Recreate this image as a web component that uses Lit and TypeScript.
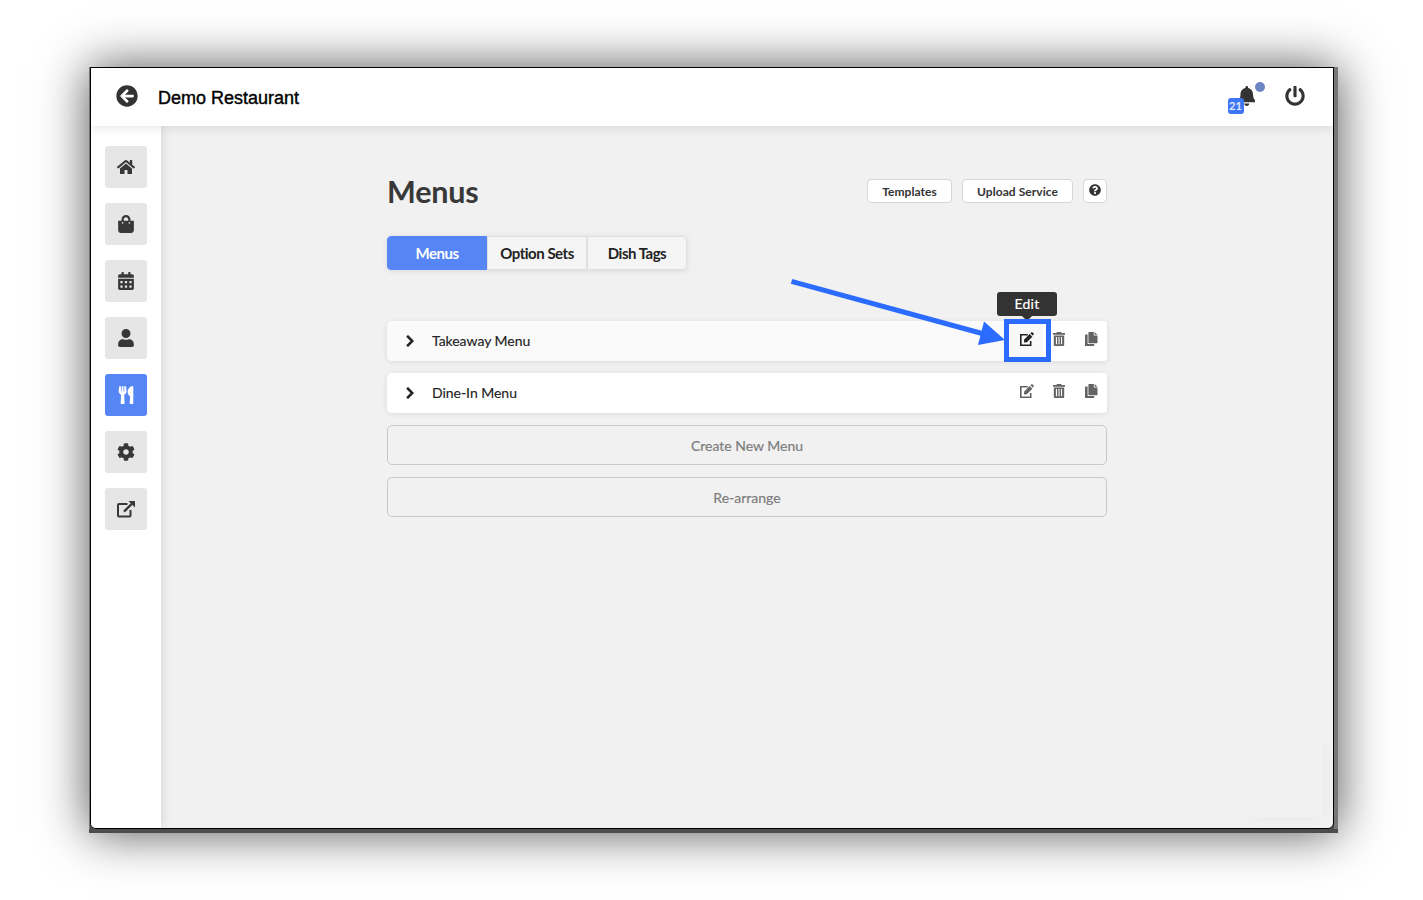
import { LitElement, html, css, svg } from "lit";
import { customElement, property } from "lit/decorators.js";

type Glyph = { w: number; h: number; body: unknown };

const cell = (x: number, y: number) =>
  `M${x} ${y + 12}c0-6.6 5.4-12 12-12h40c6.6 0 12 5.4 12 12v40c0 6.6-5.4 12-12 12h-40c-6.6 0-12-5.4-12-12z`;

const GLYPHS: Record<string, Glyph> = {
  back: { w: 512, h: 512, body: svg`<path d="M256 504C119 504 8 393 8 256S119 8 256 8s248 111 248 248-111 248-248 248zm28.9-143.6L209.4 288H392c13.3 0 24-10.7 24-24v-16c0-13.3-10.7-24-24-24H209.4l75.5-72.4c9.7-9.3 9.9-24.8.4-34.3l-11-10.9c-9.4-9.4-24.6-9.4-33.9 0L107.7 239c-9.4 9.4-9.4 24.6 0 33.9l132.7 132.7c9.4 9.4 24.6 9.4 33.9 0l11-10.9c9.5-9.5 9.3-25-.4-34.3z"/>` },
  home: { w: 576, h: 512, body: svg`<path d="M280.37 148.26L96 300.11V464a16 16 0 0 0 16 16l112.06-.29a16 16 0 0 0 15.92-16V368a16 16 0 0 1 16-16h64a16 16 0 0 1 16 16v95.64a16 16 0 0 0 16 16.05L464 480a16 16 0 0 0 16-16V300L295.67 148.26a12.19 12.19 0 0 0-15.3 0zM571.6 251.47L488 182.56V44.05a12 12 0 0 0-12-12h-56a12 12 0 0 0-12 12v72.61L318.47 43a48 48 0 0 0-61 0L4.34 251.47a12 12 0 0 0-1.6 16.9l25.5 31A12 12 0 0 0 45.15 301l235.22-193.74a12.19 12.19 0 0 1 15.3 0L530.9 301a12 12 0 0 0 16.9-1.6l25.5-31a12 12 0 0 0-1.7-16.93z"/>` },
  bag: { w: 448, h: 512, body: svg`<path d="M352 160v-32C352 57.42 294.579 0 224 0 153.42 0 96 57.42 96 128v32H0v272c0 44.183 35.817 80 80 80h288c44.183 0 80-35.817 80-80V160h-96zm-192-32c0-35.29 28.71-64 64-64s64 28.71 64 64v32H160v-32zm160 120c-13.255 0-24-10.745-24-24s10.745-24 24-24 24 10.745 24 24-10.745 24-24 24zm-192 0c-13.255 0-24-10.745-24-24s10.745-24 24-24 24 10.745 24 24-10.745 24-24 24z"/>` },
  calendar: { w: 448, h: 512, body: svg`<path fill-rule="evenodd" d="M0 464c0 26.5 21.5 48 48 48h352c26.5 0 48-21.5 48-48V192H0v272z${cell(64, 256)}${cell(192, 256)}${cell(320, 256)}${cell(64, 384)}${cell(192, 384)}${cell(320, 384)}M400 64h-48V16c0-8.8-7.2-16-16-16h-32c-8.8 0-16 7.2-16 16v48H160V16c0-8.8-7.2-16-16-16h-32c-8.8 0-16 7.2-16 16v48H48C21.5 64 0 85.5 0 112v48h448v-48c0-26.5-21.5-48-48-48z"/>` },
  user: { w: 448, h: 512, body: svg`<path d="M224 256c70.7 0 128-57.3 128-128S294.7 0 224 0 96 57.3 96 128s57.3 128 128 128zm89.6 32h-16.7c-22.2 10.2-46.9 16-72.9 16s-50.6-5.8-72.9-16h-16.7C60.2 288 0 348.2 0 422.4V464c0 26.5 21.5 48 48 48h352c26.5 0 48-21.5 48-48v-41.6c0-74.2-60.2-134.4-134.4-134.4z"/>` },
  utensils: { w: 416, h: 512, body: svg`<path d="M207.9 15.2c.8 4.7 16.1 94.5 16.1 128.8 0 52.3-27.8 89.6-68.9 104.6L168 486.7c.7 13.7-10.2 25.3-24 25.3H80c-13.7 0-24.7-11.5-24-25.3l12.9-238.1C27.7 233.6 0 196.2 0 144 0 109.6 15.3 19.9 16.1 15.2 19.3-5.1 61.4-5.4 64 16.3v141.2c1.3 3.4 15.1 3.2 16 0 1.4-25.3 7.9-139.2 8-141.8 3.3-20.8 44.7-20.8 47.9 0 .2 2.7 6.6 116.5 8 141.8.9 3.2 14.8 3.4 16 0V16.3c2.6-21.6 44.8-21.4 48-1.1zm119.2 285.7l-15 185.1c-1.2 14 9.9 26 23.9 26h56c13.3 0 24-10.7 24-24V24c0-13.2-10.7-24-24-24-82.5 0-221.4 178.5-64.9 300.9z"/>` },
  cog: { w: 512, h: 512, body: svg`<path d="M487.4 315.7l-42.6-24.6c4.3-23.2 4.3-47 0-70.2l42.6-24.6c4.9-2.8 7.1-8.6 5.5-14-11.1-35.6-30-67.8-54.7-94.6-3.8-4.1-10-5.1-14.8-2.3L380.8 110c-17.9-15.4-38.5-27.3-60.8-35.1V25.8c0-5.6-3.9-10.5-9.4-11.7-36.7-8.2-74.3-7.8-109.2 0-5.5 1.2-9.4 6.1-9.4 11.7V75c-22.2 7.9-42.8 19.8-60.8 35.1L88.7 85.5c-4.9-2.8-11-1.9-14.8 2.3-24.7 26.7-43.6 58.9-54.7 94.6-1.7 5.4.6 11.2 5.5 14L67.3 221c-4.3 23.2-4.3 47 0 70.2l-42.6 24.6c-4.9 2.8-7.1 8.6-5.5 14 11.1 35.6 30 67.8 54.7 94.6 3.8 4.1 10 5.1 14.8 2.3l42.6-24.6c17.9 15.4 38.5 27.3 60.8 35.1v49.2c0 5.6 3.9 10.5 9.4 11.7 36.7 8.2 74.3 7.8 109.2 0 5.5-1.2 9.4-6.1 9.4-11.7v-49.2c22.2-7.9 42.8-19.8 60.8-35.1l42.6 24.6c4.9 2.8 11 1.9 14.8-2.3 24.7-26.7 43.6-58.9 54.7-94.6 1.5-5.5-.7-11.3-5.6-14.1zM256 336c-44.1 0-80-35.9-80-80s35.9-80 80-80 80 35.9 80 80-35.9 80-80 80z"/>` },
  external: { w: 18, h: 18, body: svg`<path d="M10.5 4H1.9Q1 4 1 4.9v10.7q0 .9.9.9h10.7q.9 0 .9-.9V10" fill="none" stroke="currentColor" stroke-width="2"/><path d="M7 11.6 15.6 3" fill="none" stroke="currentColor" stroke-width="2.4"/><path d="M11.400 .9h5.900q.7 0 .7.7v5.900z"/>` },
  bell: { w: 448, h: 512, body: svg`<path d="M224 512c35.32 0 63.97-28.65 63.97-64H160.03c0 35.35 28.65 64 63.97 64zm215.39-149.71c-19.32-20.76-55.47-51.99-55.47-154.29 0-77.7-54.48-139.9-127.94-155.16V32c0-17.67-14.32-32-31.98-32s-31.98 14.33-31.98 32v20.84C118.56 68.1 64.08 130.3 64.08 208c0 102.3-36.15 133.53-55.47 154.29-6 6.45-8.66 14.16-8.61 21.71.11 16.4 12.98 32 32.1 32h383.8c19.12 0 32-15.6 32.1-32 .05-7.55-2.61-15.27-8.61-21.71z"/>` },
  power: { w: 512, h: 512, body: svg`<path d="M400 54.1c63 45 104 118.6 104 201.9 0 136.8-110.8 247.7-247.5 248C120 504.3 8.2 393 8 256.4 7.9 173.1 48.9 99.3 111.8 54.2c11.7-8.3 28-4.8 35 7.7L162.6 90c5.9 10.5 3.1 23.8-6.6 31-41.5 30.8-68 79.6-68 134.9-.1 92.3 74.5 168.1 168 168.1 91.6 0 168.6-74.2 168-169.1-.3-51.8-24.7-101.8-68.1-134-9.7-7.2-12.4-20.5-6.5-30.9l15.8-28.1c7-12.4 23.2-16.1 34.8-7.8zM296 264V24c0-13.3-10.7-24-24-24h-32c-13.3 0-24 10.7-24 24v240c0 13.3 10.7 24 24 24h32c13.3 0 24-10.7 24-24z"/>` },
  question: { w: 512, h: 512, body: svg`<path d="M504 256c0 136.997-111.043 248-248 248S8 392.997 8 256C8 119.083 119.043 8 256 8s248 111.083 248 248zM262.655 90c-54.497 0-89.255 22.957-116.549 63.758-3.536 5.286-2.353 12.415 2.715 16.258l34.699 26.31c5.205 3.947 12.621 3.008 16.665-2.122 17.864-22.658 30.113-35.797 57.303-35.797 20.429 0 45.698 13.148 45.698 32.958 0 14.976-12.363 22.667-32.534 33.976C247.128 238.528 216 254.941 216 296v4c0 6.627 5.373 12 12 12h56c6.627 0 12-5.373 12-12v-1.333c0-28.462 83.186-29.647 83.186-106.667 0-58.002-60.165-102-116.531-102zM256 338c-25.365 0-46 20.635-46 46 0 25.364 20.635 46 46 46s46-20.636 46-46c0-25.365-20.635-46-46-46z"/>` },
  chevron: { w: 8, h: 12, body: svg`<path d="M1.1 .8 6.3 6 1.1 11.2" fill="none" stroke="currentColor" stroke-width="2.5"/>` },
  edit: { w: 14, h: 14, body: svg`<path d="M7.800 2.700H.8v10.500h9.900V9" fill="none" stroke="currentColor" stroke-width="1.6"/><path d="M3.900 10.500l.3-3.100 5.500-5.400 2.700 2.700-5.500 5.500z"/><path d="M10.4 1.300l.9-.9q.6-.6 1.300 0l1 1q.6.7 0 1.3l-.9.9z"/>` },
  trash: { w: 12, h: 14, body: svg`<path d="M0 1h3.400L4 .1h4l.6.9H12v1.700H0z"/><path fill-rule="evenodd" d="M.8 3.400h10.400v9.500q0 1.100-1.100 1.100H1.900Q.8 14 .8 12.900zM2.900 5v7.300h1.100V5zM5.450 5v7.300h1.100V5zM8 5v7.300h1.100V5z"/>` },
  copy: { w: 13, h: 14, body: svg`<path d="M4 0h4.800v3.600h3.700v7q0 .6-.6.6H4q-.6 0-.6-.6V.6Q3.400 0 4 0z"/><path d="M9.600 0 12.500 2.800H9.600z"/><path d="M0 3.200q0-.6.6-.6h2v8.600q0 .8.8.8h5.800v1.400q0 .6-.6.6H.6q-.6 0-.6-.6z"/>` },
};

@customElement("ui-icon")
class UiIcon extends LitElement {
  @property() name = "home";
  static styles = css`
    :host { display: block; }
    .glyph { display: block; width: 100%; height: 100%; fill: currentColor; }
  `;
  render() {
    const g = GLYPHS[this.name];
    return html`<svg class="glyph" viewBox="0 0 ${g.w} ${g.h}" aria-hidden="true">${g.body}</svg>`;
  }
}

@customElement("menu-row")
class MenuRow extends LitElement {
  @property() label = "";
  @property({ type: Boolean, reflect: true }) active = false;
  static styles = css`
    :host { display: block; }
    .row {
      display: flex; height: 40px; border-radius: 5px 3px 3px 5px; background: #fff;
      box-shadow: 0 1px 6px rgba(0, 0, 0, .09); color: #222;
    }
    .main { flex: 1; display: flex; align-items: center; border-radius: 5px 0 0 5px; }
    .chevron { width: 8px; height: 12px; margin: 0 18px 0 19px; }
    .label { font-size: 14px; letter-spacing: -.03px; line-height: 20px; -webkit-text-stroke: .15px currentColor; }
    .actions { display: flex; }
    .action { position: relative; width: 32px; height: 40px; display: flex; justify-content: center; padding-top: 11px; box-sizing: border-box; color: #636363; }
    .edit { width: 14px; height: 14px; }
    .trash { width: 12px; height: 14px; }
    .copy { width: 13px; height: 14px; }
    :host([active]) .main { background: #fafafa; }
    :host([active]) .first { background: #f8f8f8; color: #222; }
    .tip {
      position: absolute; left: -14px; top: -29px; width: 60px; height: 24px; border-radius: 3px;
      background: #333; color: #fff; font-size: 14px; line-height: 24px; text-align: center; letter-spacing: .2px;
      -webkit-text-stroke: .2px #fff;
    }
    .tip::after {
      content: ""; position: absolute; left: 24px; top: 23px;
      border: 6px solid transparent; border-top-color: #333; border-bottom: 0;
    }
    .focus { position: absolute; left: -7px; top: -2px; width: 37px; height: 33px; border: 5px solid #2b6cff; }
  `;
  render() {
    return html`<div class="row">
      <div class="main"><ui-icon class="chevron" name="chevron"></ui-icon><span class="label">${this.label}</span></div>
      <div class="actions">
        <div class="action first">
          <ui-icon class="edit" name="edit"></ui-icon>
          ${this.active ? html`<div class="tip">Edit</div><div class="focus"></div>` : ""}
        </div>
        <div class="action"><ui-icon class="trash" name="trash"></ui-icon></div>
        <div class="action"><ui-icon class="copy" name="copy"></ui-icon></div>
      </div>
    </div>`;
  }
}

@customElement("app-root")
class AppRoot extends LitElement {
  static styles = css`
    :host {
      display: block; width: 1423px; height: 900px; box-sizing: border-box; overflow: hidden;
      padding: 67px 85px 67px 89px; background: #fff; font-family: Lato, sans-serif; color: #333; position: relative;
    }
    .frame {
      width: 1249px; height: 766px; box-sizing: border-box; padding: 0 4px 4px 1px;
      background: linear-gradient(#777, #777) right 0 top 0 / 4px 762px no-repeat, linear-gradient(#777, #777) left 0 top 0 / 1px 762px no-repeat, #4d4d4d;
      box-shadow: 0 0 46px rgba(0, 0, 0, .68);
    }
    .window {
      height: 762px; box-sizing: border-box; border: 1px solid #000; border-radius: 0 0 6px 6px;
      background: #f1f1f1; overflow: hidden; display: flex; flex-direction: column; position: relative;
    }
    .topbar {
      height: 58px; flex: none; background: #fff; display: flex; align-items: center; position: relative; z-index: 2;
      box-shadow: 0 2px 10px rgba(0, 0, 0, .1); padding: 0 28px 0 25px; box-sizing: border-box;
    }
    .back { width: 22px; height: 22px; margin-bottom: 2px; }
    .place { font: 18px "Liberation Sans", sans-serif; color: #000; margin-left: 20px; flex: 1; -webkit-text-stroke: .4px #000; padding-top: 2px; }
    .bellbox { position: relative; margin: 0 30px 2px 0; }
    .bell { width: 17.500px; height: 20px; }
    .power { width: 20px; height: 20px; margin-bottom: 2px; }
    .count {
      position: absolute; left: -10px; top: 12px; width: 16px; height: 16px; border-radius: 3px; background: #3f76f5;
      color: #e4ecff; font-size: 11px; font-weight: 700; line-height: 16px; text-align: center;
    }
    .dot { position: absolute; left: 17px; top: -4px; width: 10px; height: 10px; border-radius: 50%; background: #6c86c4; }
    .body { flex: 1; display: flex; min-height: 0; }
    .side {
      width: 70px; flex: none; box-sizing: border-box; background: #fff; padding: 20px 14px; display: flex; flex-direction: column;
      gap: 15px; box-shadow: 2px 0 10px rgba(0, 0, 0, .1);
    }
    .nav { height: 42px; border-radius: 3px; background: #e6e6e6; display: flex; align-items: center; justify-content: center; color: #383838; }
    .nav.on { background: #5686f5; color: #fff; }
    .i18 { width: 18px; height: 18px; }
    .home { width: 18px; height: 16px; }
    .main { flex: 1; display: flex; flex-direction: column; align-items: center; padding-top: 53px; }
    .content { width: 720px; }
    .head { display: flex; align-items: center; gap: 10px; height: 24px; }
    .title { flex: 1; margin: 0; font-size: 30.500px; letter-spacing: -.2px; font-weight: 700; line-height: 36px; color: #383838; }
    .btn {
      height: 24px; box-sizing: border-box; border: 1px solid #d6d6d6; border-radius: 4px; background: #fff; color: #333;
      font-size: 12px; font-weight: 700; line-height: 24px; text-align: center; white-space: nowrap;
    }
    .tpl { width: 85px; letter-spacing: .05px; }
    .upl { width: 111px; letter-spacing: .05px; }
    .help { width: 24px; display: flex; justify-content: center; padding-top: 4px; }
    .q { width: 12px; height: 12px; }
    .tabs { display: inline-flex; margin-top: 33px; height: 34px; border-radius: 4px; box-shadow: 0 1px 6px rgba(0, 0, 0, .1); }
    .tab {
      width: 100px; height: 34px; box-sizing: border-box; border: 1px solid #e0e0e0; background: #f5f5f5;
      font-size: 15px; letter-spacing: -.48px; font-weight: 700; line-height: 33px; text-align: center; color: #222;
    }
    .tab.on { background: #5686f5; border-color: #5686f5; color: #fff; border-radius: 4px 0 0 4px; }
    .tab:last-child { border-radius: 0 4px 4px 0; }
    .list { display: flex; flex-direction: column; gap: 12px; margin-top: 51px; }
    .wide {
      height: 40px; box-sizing: border-box; border: 1px solid #c9c9c9; border-radius: 5px; line-height: 40px;
      text-align: center; font-size: 14px; color: #7d7d7d; -webkit-text-stroke: .2px currentColor;
    }
    .ghost {
      position: absolute; right: 10px; bottom: 11px; width: 84px; height: 84px; background: #f1f1f1;
      box-shadow: 6px 6px 16px -8px rgba(0, 0, 0, .06);
    }
    .pointer { position: absolute; left: 780px; top: 270px; width: 230px; height: 80px; }
  `;
  render() {
    const nav = ["home", "bag", "calendar", "user", "utensils", "cog", "external"];
    return html`
      <div class="frame">
        <div class="window">
          <div class="topbar">
            <ui-icon class="back" name="back"></ui-icon>
            <div class="place">Demo Restaurant</div>
            <div class="bellbox">
              <ui-icon class="bell" name="bell"></ui-icon>
              <div class="count">21</div>
              <div class="dot"></div>
            </div>
            <ui-icon class="power" name="power"></ui-icon>
          </div>
          <div class="body">
            <nav class="side">
              ${nav.map((n) => html`<div class="nav ${n === "utensils" ? "on" : ""}"><ui-icon class="${n === "home" ? "home" : "i18"}" name=${n}></ui-icon></div>`)}
            </nav>
            <main class="main">
              <div class="content">
                <div class="head">
                  <h1 class="title">Menus</h1>
                  <div class="btn tpl">Templates</div>
                  <div class="btn upl">Upload Service</div>
                  <div class="btn help"><ui-icon class="q" name="question"></ui-icon></div>
                </div>
                <div class="tabs">
                  <div class="tab on">Menus</div>
                  <div class="tab">Option Sets</div>
                  <div class="tab">Dish Tags</div>
                </div>
                <div class="list">
                  <menu-row label="Takeaway Menu" active></menu-row>
                  <menu-row label="Dine-In Menu"></menu-row>
                  <div class="wide">Create New Menu</div>
                  <div class="wide">Re-arrange</div>
                </div>
              </div>
            </main>
          </div>
          <div class="ghost"></div>
        </div>
      </div>
      <svg class="pointer" viewBox="0 0 230 80" aria-hidden="true">
        <path d="M11.500 11.300 204 64" stroke="#2b6cff" stroke-width="5" fill="none" />
        <path d="M225 70 204 51.500 198 75z" fill="#2b6cff" />
      </svg>
    `;
  }
}
